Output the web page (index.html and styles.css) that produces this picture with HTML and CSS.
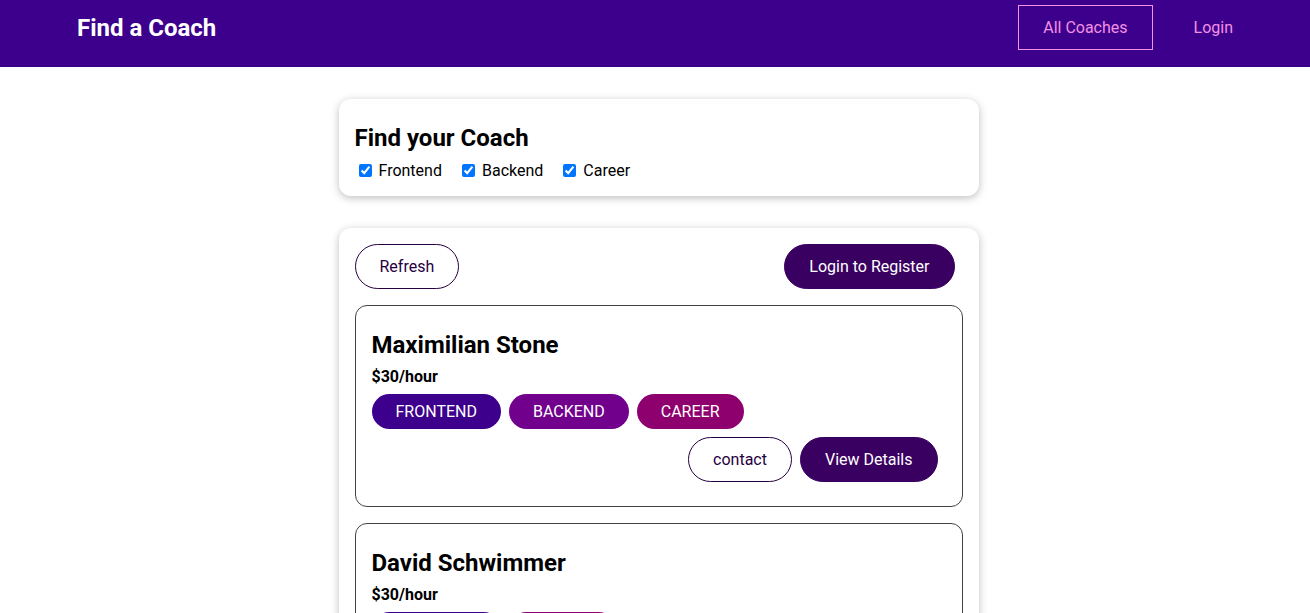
FILE: index.html
```html
<!DOCTYPE html>
<html lang="en">
<head>
<meta charset="utf-8">
<title>Find a Coach</title>
<link rel="stylesheet" href="styles.css">
</head>
<body>
<header class="header">
  <nav class="nav">
    <h1 class="brand"><a class="brand-link" href="#">Find a Coach</a></h1>
    <ul class="nav-list">
      <li class="nav-item"><a class="nav-link active" href="#">All Coaches</a></li>
      <li class="nav-item"><a class="nav-link" href="#">Login</a></li>
    </ul>
  </nav>
</header>
<main class="main">
  <section class="card">
    <h2 class="filter-title">Find your Coach</h2>
    <span class="filter-option"><input type="checkbox" id="frontend" checked><label for="frontend">Frontend</label></span><span class="filter-option"><input type="checkbox" id="backend" checked><label for="backend">Backend</label></span><span class="filter-option"><input type="checkbox" id="career" checked><label for="career">Career</label></span>
  </section>
  <section class="card">
    <div class="controls">
      <button class="btn outline">Refresh</button>
      <a class="btn" href="#">Login to Register</a>
    </div>
    <ul class="coach-list">
      <li class="coach">
        <h3 class="coach-name">Maximilian Stone</h3>
        <h4 class="coach-rate">$30/hour</h4>
        <div class="badges">
          <span class="badge frontend">FRONTEND</span><span class="badge backend">BACKEND</span><span class="badge career">CAREER</span>
        </div>
        <div class="actions">
          <a class="btn outline" href="#">contact</a>
          <a class="btn" href="#">View Details</a>
        </div>
      </li>
      <li class="coach">
        <h3 class="coach-name">David Schwimmer</h3>
        <h4 class="coach-rate">$30/hour</h4>
        <div class="badges">
          <span class="badge frontend">FRONTEND</span><span class="badge career">CAREER</span>
        </div>
        <div class="actions">
          <a class="btn outline" href="#">contact</a>
          <a class="btn" href="#">View Details</a>
        </div>
      </li>
    </ul>
  </section>
</main>
</body>
</html>
```
FILE: styles.css
```css
* { box-sizing: border-box; }
html { font-family: Roboto, "Liberation Sans", sans-serif; }
body { margin: 0; background: #fff; color: #000; }

.header {
  height: 67px;
  background-color: #3d008d;
  padding-top: 5px;
}
.nav {
  display: flex;
  justify-content: space-between;
  align-items: center;
  padding: 0 44px 0 52px;
  height: 44px;
}
.brand { margin: 0; font-size: 24px; font-weight: 700; }
.brand-link {
  color: #fff;
  text-decoration: none;
  display: inline-block;
  padding: 13px 24px 11px;
  border: 1px solid transparent;
}
.nav-list {
  list-style: none;
  margin: 0;
  padding: 0;
  display: flex;
  align-items: center;
}
.nav-item { margin: 0 8px; }
.nav-link {
  color: #f391e3;
  text-decoration: none;
  display: inline-block;
  padding: 12px 24px;
  border: 1px solid transparent;
  font-size: 16px;
}
.nav-link.active { border-color: #f391e3; }

.main { padding-left: 7px; }

.card {
  max-width: 40rem;
  margin: 32px auto;
  padding: 16px;
  border-radius: 12px;
  box-shadow: 0 2px 8px rgba(0, 0, 0, 0.26);
  background: #fff;
}
.filter-title { margin: 9px 0 8px; font-size: 24px; }
.filter-option { margin-right: 16px; font-size: 16px; }
.filter-option input, .filter-option label { vertical-align: middle; }
.filter-option label { margin-left: 4px; }

.controls { display: flex; justify-content: space-between; }

.btn {
  text-decoration: none;
  padding: 12px 24px;
  font: inherit;
  font-size: 16px;
  background-color: #3a0061;
  border: 1px solid #3a0061;
  color: #fff;
  border-radius: 30px;
  margin-right: 8px;
  display: inline-block;
  cursor: pointer;
}
.btn.outline {
  background-color: transparent;
  border-color: #270041;
  color: #270041;
}

.coach-list { list-style: none; margin: 0; padding: 0; }
.coach {
  margin: 16px 0;
  border: 1px solid #424242;
  border-radius: 12px;
  padding: 17px 16px 16px;
}
.coach-name { font-size: 24px; margin: 8px 0; }
.coach-rate { font-size: 16px; margin: 8px 0; }
.badges { margin: 8px 0; }
.badge {
  display: inline-block;
  border-radius: 30px;
  padding: 8px 24px;
  margin-right: 8px;
  color: #fff;
  font-size: 16px;
}
.frontend { background-color: #3d008d; }
.backend { background-color: #71008d; }
.career { background-color: #8d006e; }
.actions { display: flex; justify-content: flex-end; margin: 8px 0; }
```
